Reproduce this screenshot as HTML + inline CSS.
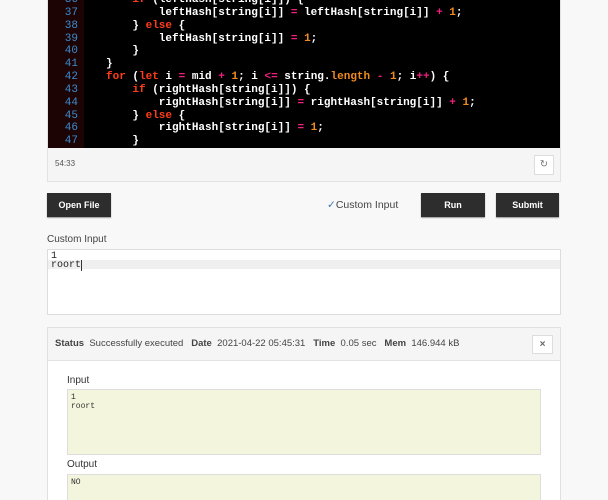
<!DOCTYPE html>
<html style="height:500px;overflow:hidden"><head><style>
body{margin:0;width:608px;height:500px;overflow:hidden;background:#f8f8f8;font-family:"Liberation Sans",sans-serif;position:relative}
.ed{position:absolute;left:47px;top:-1px;width:512px;height:181px;border:1px solid #e2e2e2;background:#f5f5f5}
.code{position:absolute;left:0;top:0;width:512px;height:148px;background:#000;overflow:hidden}
.gut{position:absolute;left:0;top:0;width:36px;height:148px;background:#1c0404}
.ln{position:absolute;left:0;width:100%;height:13px;font:bold 11px/13px "Liberation Mono",monospace;color:#fff;white-space:pre}
.n{display:inline-block;width:30px;text-align:right;color:#3d8bd0;font-weight:normal}
.c{position:absolute;left:58px}
.k{color:#ff3b18}.o{color:#f0207e}.d{color:#f08a20}
.btn{position:absolute;top:193px;height:24px;background:#2d2d2d;color:#fff;font-size:9px;font-weight:bold;text-align:center;line-height:24px;box-shadow:0 1px 1px #999}
.box{position:absolute;left:47px;width:512px;border:1px solid #ddd;background:#fff}
.mono{font:10px/9px "Liberation Mono",monospace;color:#222}
.b{font-weight:bold}
</style></head><body>
<div class="ed">
<div class="code"><div class="gut"></div>
<div class="ln" style="top:-6px"><span class="n">36</span><span class="c">    <span class="k">if</span> (leftHash[string[i]]) {</span></div>
<div class="ln" style="top:7px"><span class="n">37</span><span class="c">        leftHash[string[i]] <span class="o">=</span> leftHash[string[i]] <span class="o">+</span> <span class="d">1</span>;</span></div>
<div class="ln" style="top:20px"><span class="n">38</span><span class="c">    } <span class="k">else</span> {</span></div>
<div class="ln" style="top:33px"><span class="n">39</span><span class="c">        leftHash[string[i]] <span class="o">=</span> <span class="d">1</span>;</span></div>
<div class="ln" style="top:45px"><span class="n">40</span><span class="c">    }</span></div>
<div class="ln" style="top:58px"><span class="n">41</span><span class="c">}</span></div>
<div class="ln" style="top:71px"><span class="n">42</span><span class="c"><span class="k">for</span> (<span class="k">let</span> i <span class="o">=</span> mid <span class="o">+</span> <span class="d">1</span>; i <span class="o">&lt;=</span> string.<span class="d">length</span> <span class="o">-</span> <span class="d">1</span>; i<span class="o">++</span>) {</span></div>
<div class="ln" style="top:84px"><span class="n">43</span><span class="c">    <span class="k">if</span> (rightHash[string[i]]) {</span></div>
<div class="ln" style="top:97px"><span class="n">44</span><span class="c">        rightHash[string[i]] <span class="o">=</span> rightHash[string[i]] <span class="o">+</span> <span class="d">1</span>;</span></div>
<div class="ln" style="top:110px"><span class="n">45</span><span class="c">    } <span class="k">else</span> {</span></div>
<div class="ln" style="top:122px"><span class="n">46</span><span class="c">        rightHash[string[i]] <span class="o">=</span> <span class="d">1</span>;</span></div>
<div class="ln" style="top:135px"><span class="n">47</span><span class="c">    }</span></div>
</div>
<div style="position:absolute;left:7px;top:159px;font-size:8px;color:#555">54:33</div>
<div style="position:absolute;left:486px;top:155px;width:18px;height:18px;border:1px solid #ddd;background:#fff;font-size:10px;color:#777;text-align:center;line-height:18px">↻</div>
</div>
<div class="btn" style="left:47px;width:64px">Open File</div>
<div class="btn" style="left:421px;width:64px">Run</div>
<div class="btn" style="left:496px;width:63px">Submit</div>
<div style="position:absolute;left:327px;top:199px;font-size:10.5px;color:#444"><span style="color:#3a78b8">✓</span>Custom Input</div>
<div style="position:absolute;left:47px;top:234px;font-size:10px;color:#444">Custom Input</div>
<div class="box" style="top:249px;height:64px">
<div class="mono" style="position:absolute;left:3px;top:2px">1</div>
<div style="position:absolute;left:0;top:10px;width:100%;height:9px;background:#efefef"></div>
<div class="mono" style="position:absolute;left:3px;top:11px">roort<span style="border-left:1px solid #333"></span></div>
</div>
<div class="box" style="top:327px;height:172px;border-color:#e0e0e0;border-bottom:none">
<div style="height:32px;background:#f5f5f5;border-bottom:1px solid #e3e3e3;font-size:9.5px;color:#444;line-height:32px;padding-left:7px;white-space:nowrap">
<span class="b">Status</span>&nbsp; Successfully executed&nbsp;&nbsp; <span class="b">Date</span>&nbsp; 2021-04-22 05:45:31&nbsp;&nbsp; <span class="b">Time</span>&nbsp; 0.05 sec&nbsp;&nbsp; <span class="b">Mem</span>&nbsp; 146.944 kB</div>
<div style="position:absolute;left:484px;top:7px;width:19px;height:17px;border:1px solid #ddd;background:#fff;font-size:10px;color:#666;text-align:center;line-height:17px;font-weight:bold">×</div>
<div style="position:absolute;left:19px;top:47px;font-size:10px;color:#333">Input</div>
<div style="position:absolute;left:19px;top:61px;width:472px;height:64px;background:#f3f5dc;border:1px solid #ddd">
<div class="mono" style="position:absolute;left:3px;top:3px;font-size:8px;line-height:9px;color:#333">1<br>roort</div></div>
<div style="position:absolute;left:19px;top:131px;font-size:10px;color:#333">Output</div>
<div style="position:absolute;left:19px;top:146px;width:472px;height:40px;background:#f3f5dc;border:1px solid #ddd">
<div class="mono" style="position:absolute;left:3px;top:3px;font-size:8px;color:#333">NO</div></div>
</div>
</body></html>
